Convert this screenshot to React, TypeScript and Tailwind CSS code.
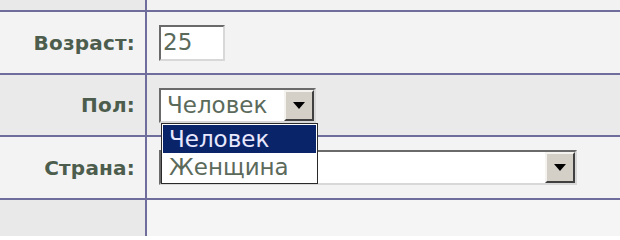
const line = "border-[#6f6d9c]";

function Arrow() {
  return (
    <div className="flex h-full w-[30px] items-center justify-center border-2 border-t-[#f4f3ef] border-l-[#f4f3ef] border-b-[#404040] border-r-[#404040] bg-[#d4d0c8]">
      <svg width="12" height="7" viewBox="0 0 12 7">
        <path d="M0 0h12L6 7z" fill="#000" />
      </svg>
    </div>
  );
}

function Row({
  label,
  bg,
  leftBg,
  children,
  h,
  last,
}: {
  label?: string;
  bg: string;
  leftBg?: string;
  children?: React.ReactNode;
  h: string;
  last?: boolean;
}) {
  return (
    <div className={`flex ${h} ${last ? "" : "border-b-2"} ${line} ${bg}`}>
      <div className={`flex w-[147px] shrink-0 items-center justify-end border-r-2 ${line} pr-[10px] ${leftBg ?? ""}`}>
        {label && (
          <span className="text-[20px] font-bold tracking-[0.2px] text-[#4d5d4d]">{label}</span>
        )}
      </div>
      <div className="flex flex-1 items-center pl-[12px]">{children}</div>
    </div>
  );
}

export default function App() {
  return (
    <div
      className="relative h-[236px] w-[620px] overflow-hidden bg-[#f1f1f1]"
      style={{ fontFamily: '"DejaVu Sans", Verdana, sans-serif' }}
    >
      <Row h="h-[12px]" bg="bg-[#f2f2f2]" leftBg="bg-[#e9e9e9]" />
      <Row label="Возраст:" h="h-[63px]" bg="bg-[#f3f3f3]">
        <div className="flex h-[36px] w-[66px] items-center border-2 border-t-[#6a6a6a] border-l-[#6a6a6a] border-b-[#d8d8d8] border-r-[#d8d8d8] bg-white pl-[2px] text-[23px] text-[#5b6a5b]">
          25
        </div>
      </Row>
      <Row label="Пол:" h="h-[62px]" bg="bg-[#eaeaea]">
        <div className="flex h-[35px] w-[157px] items-center border-2 border-t-[#6a6a6a] border-l-[#6a6a6a] border-b-[#d8d8d8] border-r-[#d8d8d8] bg-white">
          <span className="flex-1 pl-[6px] text-[23px] leading-none text-[#5b6a5b]">Человек</span>
          <Arrow />
        </div>
      </Row>
      <Row label="Страна:" h="h-[63px]" bg="bg-[#f3f3f3]">
        <div className="flex h-[35px] w-[418px] items-center border-2 border-t-[#6a6a6a] border-l-[#6a6a6a] border-b-[#d8d8d8] border-r-[#d8d8d8] bg-white">
          <span className="flex-1" />
          <Arrow />
        </div>
      </Row>
      <Row h="h-[36px]" bg="bg-[#f5f5f5]" leftBg="bg-[#e9e9e9]" last />

      <div className="absolute left-[161px] top-[123px] flex w-[157px] flex-col border border-[#2a2a2a] bg-white p-px text-[23px] leading-none">
        <div className="flex h-[28px] items-center bg-[#0a246a] pl-[6px] text-[#e8e8ff]">
          Человек
        </div>
        <div className="flex h-[29px] items-center pl-[6px] text-[#5b6a5b]">
          Женщина
        </div>
      </div>
    </div>
  );
}
